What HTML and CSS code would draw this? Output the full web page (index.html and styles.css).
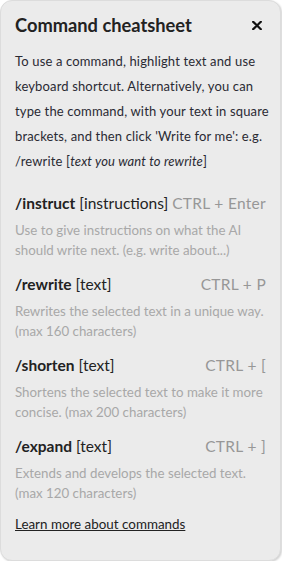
FILE: index.html
```html
<!DOCTYPE html>
<html>
<head>
<meta charset="utf-8">
<link rel="stylesheet" href="styles.css">
</head>
<body>
<div class="card">
  <div class="header">
    <h1 class="title">Command cheatsheet</h1>
    <svg class="close" width="10" height="9" viewBox="0 0 10 9"><path d="M1.2 0.8 L8.8 8.2 M8.8 0.8 L1.2 8.2" stroke="#111" stroke-width="2.2" stroke-linecap="square"/></svg>
  </div>
  <p class="intro">To use a command, highlight text and use keyboard shortcut. Alternatively, you can type the command, with your text in square brackets, and then click 'Write for me': e.g. /rewrite [<em>text you want to rewrite</em>]</p>
  <div class="cmd">
    <div class="cmd-head"><span><b>/instruct</b> [instructions]</span><span class="key">CTRL + Enter</span></div>
    <p class="desc">Use to give instructions on what the AI should write next. (e.g. write about...)</p>
  </div>
  <div class="cmd">
    <div class="cmd-head"><span><b>/rewrite</b> [text]</span><span class="key">CTRL + P</span></div>
    <p class="desc">Rewrites the selected text in a unique way. (max 160 characters)</p>
  </div>
  <div class="cmd">
    <div class="cmd-head"><span><b>/shorten</b> [text]</span><span class="key">CTRL + [</span></div>
    <p class="desc">Shortens the selected text to make it more concise. (max 200 characters)</p>
  </div>
  <div class="cmd">
    <div class="cmd-head"><span><b>/expand</b> [text]</span><span class="key">CTRL + ]</span></div>
    <p class="desc">Extends and develops the selected text. (max 120 characters)</p>
  </div>
  <a class="more" href="#">Learn more about commands</a>
</div>
</body>
</html>
```
FILE: styles.css
```css
html, body { margin: 0; padding: 0; background: #fff; }
body { font-family: "Lato", "Liberation Sans", sans-serif; color: #2a2a2e; }
.card {
  box-sizing: border-box;
  width: 281px;
  height: 561px;
  background: #ebebeb;
  border: 1px solid #dcdcdc;
  border-radius: 12px;
  box-shadow: 1px 1px 2px rgba(0,0,0,0.18);
  padding: 10px 14px 0 14px;
}
.header { display: flex; justify-content: space-between; align-items: center; height: 28px; }
.title { margin: 0; font-size: 18.3px; font-weight: 700; color: #222; }
.close { margin-right: 4px; display: block; }
.intro { margin: 10px -8px 0 0; font-size: 13px; letter-spacing: 0.15px; line-height: 25px; color: #2a2a33; }
.intro em { font-style: italic; }
.intro + .cmd { margin-top: 17px; }
.cmd-head { display: flex; justify-content: space-between; align-items: baseline; font-size: 15.5px; color: #222; line-height: 24px; white-space: nowrap; }
.cmd-head b { font-weight: 700; }
.key { font-size: 15.5px; color: #979797; letter-spacing: 0.3px; }
.desc { margin: 5px 0 12px 0; font-size: 13.3px; line-height: 20px; color: #a8a8a8; }
.more { display: block; width: fit-content; margin-top: 7px; line-height: 18px; font-size: 13.4px; color: #222; text-decoration: underline; }
```
